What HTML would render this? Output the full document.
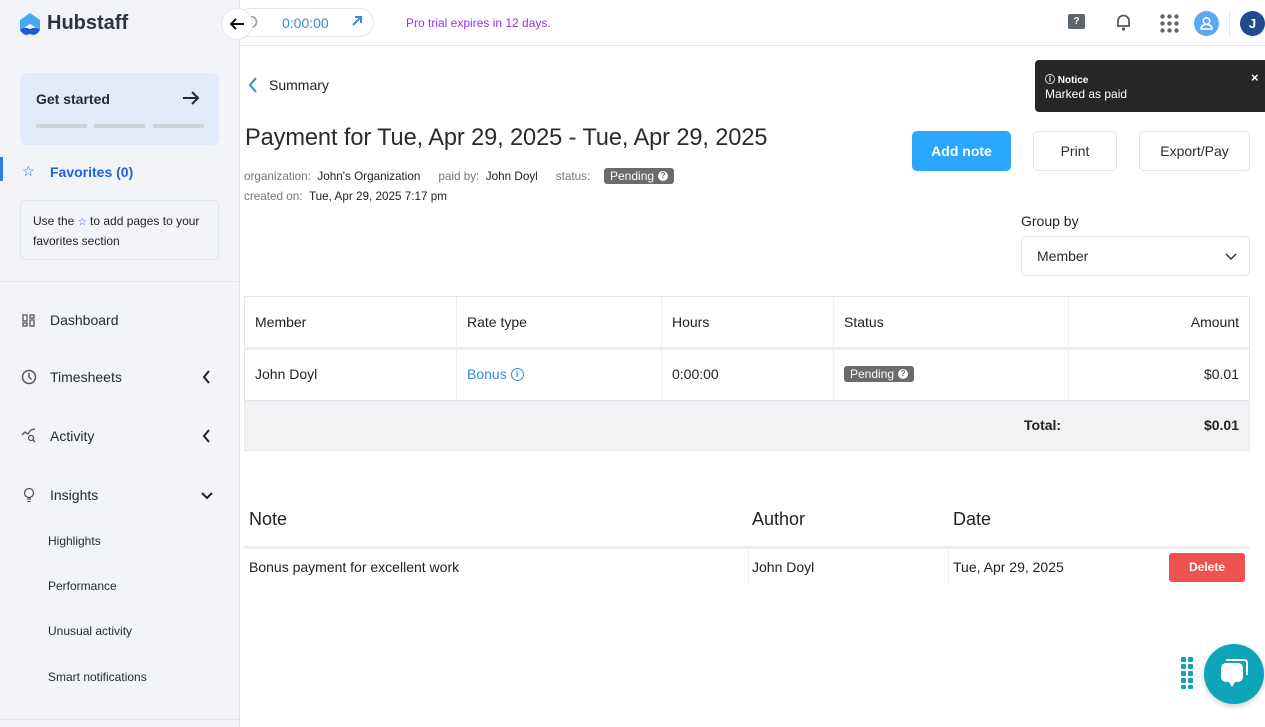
<!DOCTYPE html>
<html><head><meta charset="utf-8"><style>
*{box-sizing:border-box;margin:0;padding:0}
body{width:1265px;height:727px;overflow:hidden;font-family:"Liberation Sans",Arial,sans-serif;background:#fff;position:relative;color:#222}
.a{position:absolute}
.side{left:0;top:0;width:240px;height:727px;background:#f2f4f7;border-right:1px solid #e2e5ea}
.nav{left:22px;font-size:14px;color:#1f2937}
.sub{left:48px;font-size:12px;color:#1f2937}
.btn{border:1px solid #e3e5e8;border-radius:5px;background:#fff;font-size:14px;color:#2b2b2b;display:flex;align-items:center;justify-content:center}
.th{font-size:14px;color:#222}
.td{font-size:14px;color:#222}
.badge{background:#6b6b6b;color:#fff;font-size:12px;padding:1px 6px;border-radius:3px;display:inline-flex;align-items:center;gap:4px}
.q{display:inline-block;width:10px;height:10px;border-radius:50%;background:#fff;color:#6b6b6b;font-size:8px;font-weight:bold;text-align:center;line-height:10px}
</style></head><body>
<div class="a side"></div>
<div class="a" style="left:0;top:719px;width:240px;height:1px;background:#e2e5ea"></div>
<svg class="a" style="left:18px;top:12px" width="24" height="26" viewBox="0 0 24 26"><path d="M12 1 L22 8 L22 18 L12 12 L2 18 L2 8Z" fill="#4aa8f0"/><path d="M2 18 Q6 14 12 17 Q18 14 22 18 Q18 25 12 22 Q6 25 2 18Z" fill="#1e5ad8"/></svg>
<div class="a" style="left:47px;top:12px;font-size:20px;font-weight:bold;color:#2b3440">Hubstaff</div>
<div class="a" style="left:236px;top:8px;width:138px;height:29px;border:1px solid #e2e5ea;border-radius:15px;background:#fff"></div>
<svg class="a" style="left:244px;top:15px" width="14" height="14" fill="none" stroke="#999" stroke-width="1.5"><circle cx="7" cy="7" r="5.5"/></svg>
<div class="a" style="left:221px;top:8px;width:32px;height:32px;border-radius:50%;background:#fff;border:1px solid #e2e5ea;z-index:2"></div>
<svg class="a" style="left:229px;top:17px;z-index:3" width="16" height="14" fill="none" stroke="#111" stroke-width="2"><path d="M15 7 H2 M7 2 L2 7 L7 12"/></svg>
<div class="a" style="left:282px;top:15px;font-size:14px;color:#2f8fe0">0:00:00</div>
<svg class="a" style="left:351px;top:15px" width="12" height="12" fill="none" stroke="#2f8fe0" stroke-width="2"><path d="M2 10 L10 2 M4 2 H10 V8"/></svg>
<div class="a" style="left:406px;top:16px;font-size:12px;color:#9b30e8">Pro trial expires in 12 days.</div>
<div class="a" style="left:240px;top:45px;width:1025px;height:1px;background:#e5e7eb"></div>
<div class="a" style="left:1068px;top:14px;width:17px;height:15px;background:#5d6570;border-radius:2px;color:#fff;font-size:10px;font-weight:bold;text-align:center;line-height:15px">?</div>
<svg class="a" style="left:1115px;top:13px" width="17" height="18" viewBox="0 0 17 18"><path d="M3 13 V8 a5.5 5.5 0 0 1 11 0 V13 H2 H15" fill="none" stroke="#555" stroke-width="1.7"/><circle cx="8.5" cy="16" r="1.6" fill="#555"/></svg>
<svg class="a" style="left:1160px;top:14px" width="19" height="19"><g fill="#666"><circle cx="2.5" cy="2.5" r="2.2"/><circle cx="9.5" cy="2.5" r="2.2"/><circle cx="16.5" cy="2.5" r="2.2"/><circle cx="2.5" cy="9.5" r="2.2"/><circle cx="9.5" cy="9.5" r="2.2"/><circle cx="16.5" cy="9.5" r="2.2"/><circle cx="2.5" cy="16.5" r="2.2"/><circle cx="9.5" cy="16.5" r="2.2"/><circle cx="16.5" cy="16.5" r="2.2"/></g></svg>
<div class="a" style="left:1194px;top:11px;width:25px;height:25px;border-radius:50%;background:#5aa9f5"></div>
<svg class="a" style="left:1199px;top:16px" width="15" height="15"><circle cx="7.5" cy="5" r="3.2" fill="none" stroke="#fff" stroke-width="1.5"/><path d="M2 13 Q2 8.5 7.5 8.5 Q13 8.5 13 13Z" fill="none" stroke="#fff" stroke-width="1.5"/></svg>
<div class="a" style="left:1229px;top:10px;width:1px;height:26px;background:#e2e5ea"></div>
<div class="a" style="left:1240px;top:11px;width:25px;height:25px;border-radius:50%;background:#1e4c8f;color:#fff;font-size:13px;font-weight:bold;text-align:center;line-height:25px">J</div>
<div class="a" style="left:20px;top:73px;width:199px;height:72px;background:#e3ebfb;border-radius:6px"></div>
<div class="a" style="left:36px;top:91px;font-size:14px;font-weight:bold;color:#1f2937">Get started</div>
<svg class="a" style="left:182px;top:91px" width="18" height="14" fill="none" stroke="#1f2937" stroke-width="2"><path d="M1 7 H16 M10 1 L16 7 L10 13"/></svg>
<div class="a" style="left:36px;top:124px;width:51px;height:4px;background:#d0d4da"></div>
<div class="a" style="left:94px;top:124px;width:51px;height:4px;background:#d0d4da"></div>
<div class="a" style="left:153px;top:124px;width:51px;height:4px;background:#d0d4da"></div>
<div class="a" style="left:0;top:157px;width:3px;height:24px;background:#2f7fe0"></div>
<div class="a" style="left:22px;top:163px;font-size:14px;color:#2462d9">☆</div>
<div class="a" style="left:50px;top:164px;font-size:14px;font-weight:bold;color:#2462d9">Favorites (0)</div>
<div class="a" style="left:20px;top:200px;width:199px;height:60px;border:1px solid #e2e5ea;border-radius:6px"></div>
<div class="a" style="left:33px;top:212px;font-size:12px;line-height:18px;color:#222;width:180px">Use the <span style="color:#2462d9;font-size:10px">☆</span> to add pages to your favorites section</div>
<div class="a" style="left:0;top:281px;width:240px;height:1px;background:#e2e5ea"></div>
<svg class="a" style="left:22px;top:314px" width="14" height="14" fill="none" stroke="#555" stroke-width="1.3"><rect x="1" y="1" width="4" height="6"/><rect x="1" y="9" width="4" height="3"/><rect x="8" y="1" width="4" height="3"/><rect x="8" y="6" width="4" height="6"/></svg>
<div class="a nav" style="left:50px;top:312px">Dashboard</div>
<svg class="a" style="left:21px;top:369px" width="16" height="16" fill="none" stroke="#555" stroke-width="1.5"><circle cx="8" cy="8" r="6.5"/><path d="M8 4 V8 L10.5 10.5"/></svg>
<div class="a nav" style="left:50px;top:369px">Timesheets</div>
<svg class="a" style="left:202px;top:370px" width="9" height="14" fill="none" stroke="#222" stroke-width="2"><path d="M7 1 L2 7 L7 13"/></svg>
<svg class="a" style="left:21px;top:428px" width="16" height="16" fill="none" stroke="#555" stroke-width="1.3"><path d="M1 7 L4 4 L7 6 L10 2 L14 1"/><circle cx="10" cy="10" r="2.5"/><path d="M12 12 L14 14"/></svg>
<div class="a nav" style="left:50px;top:428px">Activity</div>
<svg class="a" style="left:202px;top:429px" width="9" height="14" fill="none" stroke="#222" stroke-width="2"><path d="M7 1 L2 7 L7 13"/></svg>
<svg class="a" style="left:22px;top:487px" width="14" height="17" fill="none" stroke="#555" stroke-width="1.3"><circle cx="7" cy="6" r="4.5"/><path d="M5 12 H9 M5.5 14.5 H8.5"/></svg>
<div class="a nav" style="left:50px;top:487px">Insights</div>
<svg class="a" style="left:200px;top:491px" width="14" height="9" fill="none" stroke="#222" stroke-width="2"><path d="M2 2 L7 7 L12 2"/></svg>
<div class="a sub" style="top:534px">Highlights</div>
<div class="a sub" style="top:579px">Performance</div>
<div class="a sub" style="top:624px">Unusual activity</div>
<div class="a sub" style="top:670px">Smart notifications</div>
<svg class="a" style="left:247px;top:76px" width="12" height="18" fill="none" stroke="#2f8fe0" stroke-width="2"><path d="M9 2 L3 9 L9 16"/></svg>
<div class="a" style="left:269px;top:77px;font-size:14px;color:#222">Summary</div>
<div class="a" style="left:245px;top:125px;font-size:23.6px;color:#2b2b2b;letter-spacing:-0.1px">Payment for Tue, Apr 29, 2025 - Tue, Apr 29, 2025</div>
<div class="a" style="left:244px;top:170px;font-size:11.7px;color:#777">organization: <span style="color:#222">&nbsp;John's Organization</span><span style="margin-left:18px">paid by:</span> <span style="color:#222">&nbsp;John Doyl</span><span style="margin-left:18px">status:</span></div>
<div class="a badge" style="left:604px;top:168px">Pending <span class="q">?</span></div>
<div class="a" style="left:244px;top:190px;font-size:11.7px;color:#777">created on: <span style="color:#222">&nbsp;Tue, Apr 29, 2025 7:17 pm</span></div>
<div class="a" style="left:1035px;top:60px;width:230px;height:52px;background:#262626;border-radius:4px 0 0 4px"></div>
<div class="a" style="left:1045px;top:71px;font-size:10px;font-weight:bold;color:#fff">ⓘ Notice</div>
<div class="a" style="left:1045px;top:87px;font-size:12px;color:#fff">Marked as paid</div>
<div class="a" style="left:1251px;top:70px;font-size:13px;font-weight:bold;color:#fff">×</div>
<div class="a btn" style="left:912px;top:131px;width:99px;height:40px;background:#2aa6fb;border-color:#2aa6fb;color:#fff;font-weight:bold">Add note</div>
<div class="a btn" style="left:1033px;top:131px;width:84px;height:40px">Print</div>
<div class="a btn" style="left:1139px;top:131px;width:111px;height:40px">Export/Pay</div>
<div class="a" style="left:1021px;top:213px;font-size:14px;color:#222">Group by</div>
<div class="a btn" style="left:1021px;top:236px;width:229px;height:40px;justify-content:flex-start;padding-left:15px">Member</div>
<svg class="a" style="left:1225px;top:253px" width="12" height="8" fill="none" stroke="#333" stroke-width="1.5"><path d="M1 1 L6 6 L11 1"/></svg>
<div class="a" style="left:244px;top:296px;width:1006px;height:155px;border:1px solid #e5e7eb"></div>
<div class="a" style="left:245px;top:347px;width:1004px;height:3px;background:#eceef1"></div>
<div class="a" style="left:245px;top:400px;width:1004px;height:50px;background:#f1f2f4;border-top:1px solid #e3e5e8"></div>
<div class="a" style="left:456px;top:297px;width:1px;height:103px;background:#eceef1"></div>
<div class="a" style="left:661px;top:297px;width:1px;height:103px;background:#eceef1"></div>
<div class="a" style="left:833px;top:297px;width:1px;height:103px;background:#eceef1"></div>
<div class="a" style="left:1068px;top:297px;width:1px;height:103px;background:#eceef1"></div>
<div class="a th" style="left:255px;top:314px">Member</div>
<div class="a th" style="left:467px;top:314px">Rate type</div>
<div class="a th" style="left:672px;top:314px">Hours</div>
<div class="a th" style="left:844px;top:314px">Status</div>
<div class="a th" style="right:26px;top:314px">Amount</div>
<div class="a td" style="left:255px;top:366px">John Doyl</div>
<div class="a td" style="left:467px;top:366px;color:#2f8fe0">Bonus <span style="display:inline-block;width:13px;height:13px;border:1.5px solid #2f8fe0;border-radius:50%;font-size:9px;text-align:center;line-height:10px;font-weight:bold;vertical-align:2px">i</span></div>
<div class="a td" style="left:672px;top:366px">0:00:00</div>
<div class="a badge" style="left:844px;top:366px">Pending <span class="q">?</span></div>
<div class="a td" style="right:26px;top:366px">$0.01</div>
<div class="a td" style="left:1024px;top:417px;font-weight:bold">Total:</div>
<div class="a td" style="right:26px;top:417px;font-weight:bold">$0.01</div>
<div class="a" style="left:249px;top:509px;font-size:18px;color:#222">Note</div>
<div class="a" style="left:752px;top:509px;font-size:18px;color:#222">Author</div>
<div class="a" style="left:953px;top:509px;font-size:18px;color:#222">Date</div>
<div class="a" style="left:244px;top:546px;width:1006px;height:3px;background:#eceef1"></div>
<div class="a" style="left:748px;top:549px;width:1px;height:36px;background:#f0f1f3"></div>
<div class="a" style="left:948px;top:549px;width:1px;height:36px;background:#f0f1f3"></div>
<div class="a td" style="left:249px;top:559px">Bonus payment for excellent work</div>
<div class="a td" style="left:752px;top:559px">John Doyl</div>
<div class="a td" style="left:953px;top:559px">Tue, Apr 29, 2025</div>
<div class="a" style="left:1169px;top:553px;width:76px;height:29px;background:#ef5350;border-radius:3px;color:#fff;font-size:12px;font-weight:bold;text-align:center;line-height:29px">Delete</div>
<svg class="a" style="left:1181px;top:657px" width="14" height="33"><g fill="#0fa3b8"><rect x="0" y="0" width="5" height="5" rx="1"/><rect x="7" y="0" width="5" height="5" rx="1"/><rect x="0" y="7" width="5" height="5" rx="1"/><rect x="7" y="7" width="5" height="5" rx="1"/><rect x="0" y="14" width="5" height="5" rx="1"/><rect x="7" y="14" width="5" height="5" rx="1"/><rect x="0" y="21" width="5" height="5" rx="1"/><rect x="7" y="21" width="5" height="5" rx="1"/><rect x="0" y="28" width="5" height="4" rx="1"/><rect x="7" y="28" width="5" height="4" rx="1"/></g></svg>
<div class="a" style="left:1204px;top:644px;width:60px;height:60px;border-radius:50%;background:#0ea5b9;box-shadow:0 2px 6px rgba(0,0,0,.2)"></div>
<svg class="a" style="left:1218px;top:657px" width="32" height="34"><path d="M8 3 H26 Q29 3 29 6 V18" fill="none" stroke="#fff" stroke-width="2"/><rect x="3" y="6" width="22" height="19" rx="5" fill="#fff"/><path d="M11 25 L14 30 L17 25Z" fill="#fff"/></svg>
</body></html>
